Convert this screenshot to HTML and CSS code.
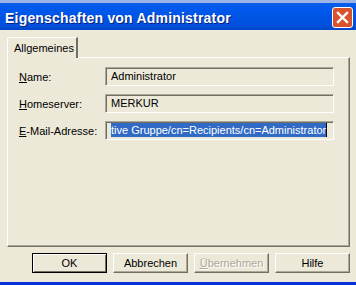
FILE: index.html
```html
<!DOCTYPE html>
<html>
<head>
    <meta charset="UTF-8">
    <title>Eigenschaften von Administrator</title>
    <link rel="stylesheet" href="styles.css">
</head>
<body>
    <div class="window">
        <div class="titlebar">
            <span class="title">Eigenschaften von Administrator</span>
            <div class="closebox">
                <svg width="19" height="19" viewBox="0 0 19 19">
                    <path d="M5 5 L14 14 M14 5 L5 14" stroke="#ffffff" stroke-width="2.4" stroke-linecap="square"/>
                </svg>
            </div>
        </div>
        <div class="content">
            <div class="tabs">
                <div class="tab">Allgemeines</div>
            </div>
            <div class="panel">
                <div class="row">
                    <label><u>N</u>ame:</label>
                    <div class="field">Administrator</div>
                </div>
                <div class="row">
                    <label><u>H</u>omeserver:</label>
                    <div class="field">MERKUR</div>
                </div>
                <div class="row">
                    <label><u>E</u>-Mail-Adresse:</label>
                    <div class="field"><span class="sel">tive Gruppe/cn=Recipients/cn=Administrator</span></div>
                </div>
            </div>
            <div class="buttons">
                <button class="btn default">OK</button>
                <button class="btn">Abbrechen</button>
                <button class="btn disabled"><u>Ü</u>bernehmen</button>
                <button class="btn">Hilfe</button>
            </div>
        </div>
        <div class="frame-bottom"></div>
    </div>
</body>
</html>
```

FILE: styles.css
```css
body {
    margin: 0;
    background: #ece9d8;
    font-family: "Liberation Sans", Arial, sans-serif;
    font-size: 11px;
    color: #000;
}
.window {
    width: 356px;
    height: 285px;
    display: flex;
    flex-direction: column;
    overflow: hidden;
}
.titlebar {
    height: 30px;
    box-sizing: border-box;
    border-top: 3px solid #9fb4e6;
    background: linear-gradient(#0a5ee8 0%, #0058ee 20%, #0054e3 55%, #0050dd 85%, #0046c8 100%);
    display: flex;
    align-items: center;
    justify-content: space-between;
    padding: 0 3px 0 5px;
}
.title {
    color: #fff;
    font-weight: bold;
    font-size: 14px;
    letter-spacing: 0.2px;
    text-shadow: 1px 1px 0 #0a1e7a;
    margin-top: 2px;
}
.closebox {
    width: 21px;
    height: 21px;
    box-sizing: border-box;
    border: 1px solid #ffffff;
    border-radius: 3px;
    background: #d8532d;
    margin-top: 2px;
}
.closebox svg {
    display: block;
}
.content {
    flex: 1;
    padding: 7px 6px 0 7px;
    display: flex;
    flex-direction: column;
}
.tabs {
    display: flex;
    height: 20px;
}
.tab {
    width: 71px;
    box-sizing: border-box;
    border-top: 1px solid #fff;
    border-left: 1px solid #fff;
    border-right: 2px solid #716f64;
    border-top-left-radius: 2px;
    padding: 4px 0 0 6px;
    margin-bottom: -1px;
    background: #ece9d8;
    position: relative;
    z-index: 1;
}
.panel {
    height: 190px;
    box-sizing: border-box;
    border-top: 1px solid #fff;
    border-left: 1px solid #fff;
    border-right: 1px solid #716f64;
    border-bottom: 1px solid #716f64;
    box-shadow: inset -1px -1px 0 #aca899;
    padding: 9px 13px 0 11px;
    display: flex;
    flex-direction: column;
    gap: 8px;
}
.row {
    display: flex;
    align-items: center;
}
.row label {
    width: 86px;
}
.field {
    width: 229px;
    height: 19px;
    box-sizing: border-box;
    border-top: 1px solid #aca899;
    border-left: 1px solid #aca899;
    border-right: 1px solid #fff;
    border-bottom: 1px solid #fff;
    box-shadow: inset 1px 1px 0 #716f64;
    padding: 2px 0 0 5px;
    white-space: nowrap;
    overflow: hidden;
}
.sel {
    background: #316ac5;
    color: #fff;
    padding: 1px 0 1px 0;
    border-right: 1px solid #000;
}
.buttons {
    display: flex;
    justify-content: flex-end;
    gap: 6px;
    padding-top: 6px;
}
.btn {
    width: 75px;
    height: 20px;
    box-sizing: border-box;
    background: #ece9d8;
    border: 1px solid;
    border-color: #fff #716f64 #716f64 #fff;
    box-shadow: inset -1px -1px 0 #aca899;
    font-family: "Liberation Sans", Arial, sans-serif;
    font-size: 11px;
    color: #000;
    padding: 0;
}
.btn.default {
    border: 1px solid #000;
    box-shadow: inset 1px 1px 0 #fff, inset -1px -1px 0 #716f64;
}
.btn.disabled {
    color: #aca899;
    text-shadow: 1px 1px 0 #fff;
}
.frame-bottom {
    height: 3px;
    background: #0831d9;
    margin-top: auto;
}
```
